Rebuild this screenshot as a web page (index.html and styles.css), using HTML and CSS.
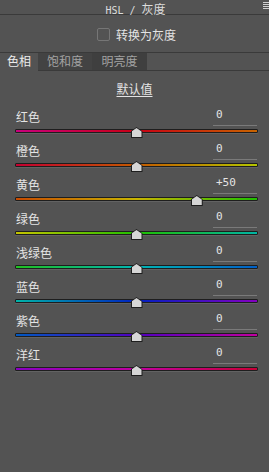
FILE: index.html
```html
<!DOCTYPE html>
<html lang="zh">
<head>
    <meta charset="UTF-8">
    <title>HSL / 灰度</title>
    <link rel="stylesheet" href="styles.css">
</head>
<body>
    <div class="panel">
        <header class="panel-header">
            <span class="title"><span class="latin">HSL / </span>灰度</span>
            <svg class="menu" width="6" height="8" viewBox="0 0 6 8">
                <rect x="0" y="0" width="6" height="1" fill="#d0d0d0"/>
                <rect x="0" y="2" width="6" height="1" fill="#d0d0d0"/>
                <rect x="0" y="4" width="6" height="1" fill="#d0d0d0"/>
                <rect x="0" y="6" width="6" height="1" fill="#d0d0d0"/>
            </svg>
        </header>

        <label class="convert">
            <span class="checkbox"></span>
            <span>转换为灰度</span>
        </label>

        <nav class="tabs">
            <span class="tab active">色相</span>
            <span class="tab tab-sat">饱和度</span>
            <span class="tab tab-lum">明亮度</span>
            <span class="tabs-rest"></span>
        </nav>

        <div class="default"><span>默认值</span></div>

        <div class="sliders">
            <div class="row">
                <div class="row-head"><span class="label">红色</span><span class="value">0</span></div>
                <div class="track red"><span class="thumb" style="left: 50%"></span></div>
            </div>
            <div class="row">
                <div class="row-head"><span class="label">橙色</span><span class="value">0</span></div>
                <div class="track orange"><span class="thumb" style="left: 50%"></span></div>
            </div>
            <div class="row">
                <div class="row-head"><span class="label">黄色</span><span class="value">+50</span></div>
                <div class="track yellow"><span class="thumb" style="left: 75%"></span></div>
            </div>
            <div class="row">
                <div class="row-head"><span class="label">绿色</span><span class="value">0</span></div>
                <div class="track green"><span class="thumb" style="left: 50%"></span></div>
            </div>
            <div class="row">
                <div class="row-head"><span class="label">浅绿色</span><span class="value">0</span></div>
                <div class="track aqua"><span class="thumb" style="left: 50%"></span></div>
            </div>
            <div class="row">
                <div class="row-head"><span class="label">蓝色</span><span class="value">0</span></div>
                <div class="track blue"><span class="thumb" style="left: 50%"></span></div>
            </div>
            <div class="row">
                <div class="row-head"><span class="label">紫色</span><span class="value">0</span></div>
                <div class="track purple"><span class="thumb" style="left: 50%"></span></div>
            </div>
            <div class="row">
                <div class="row-head"><span class="label">洋红</span><span class="value">0</span></div>
                <div class="track magenta"><span class="thumb" style="left: 50%"></span></div>
            </div>
        </div>
    </div>
</body>
</html>
```

FILE: styles.css
```css
body {
    margin: 0;
    background-color: #535353;
    color: #e4e4e4;
    font-family: "Noto Sans CJK SC", "Noto Sans", sans-serif;
    font-size: 12px;
}
.panel {
    width: 269px;
    height: 472px;
    overflow: hidden;
}
.panel-header {
    position: relative;
    box-sizing: border-box;
    height: 15px;
    border-bottom: 1px solid #3a3a3a;
    text-align: center;
    color: #dcdcdc;
}
.panel-header .title {
    display: inline-block;
    padding-left: 2px;
    font-size: 12px;
    line-height: 14px;
}
.panel-header .latin {
    font-family: "DejaVu Sans Mono", monospace;
    font-size: 10px;
    white-space: pre;
}
.panel-header .menu {
    position: absolute;
    right: 0;
    top: 2px;
}
.convert {
    height: 37px;
    display: flex;
    align-items: center;
    justify-content: center;
    gap: 6px;
    padding-left: 4px;
    padding-top: 1px;
    box-sizing: border-box;
}
.checkbox {
    width: 11px;
    height: 11px;
    border: 1px solid #767676;
    border-radius: 2px;
}
.tabs {
    display: flex;
    height: 18px;
    border-top: 1px solid #3a3a3a;
}
.tab {
    box-sizing: border-box;
    height: 18px;
    line-height: 16px;
    text-align: center;
    color: #a2a2a2;
    background-color: #434343;
    border-bottom: 1px solid #3a3a3a;
}
.tab.active {
    width: 38px;
    color: #ececec;
    background-color: #535353;
    border-bottom-color: #535353;
}
.tab-sat {
    width: 54px;
}
.tab-lum {
    width: 55px;
    background-color: #3f3f3f;
}
.tabs-rest {
    flex: 1;
    border-bottom: 1px solid #3a3a3a;
}
.default {
    padding-top: 10px;
    line-height: 16px;
    text-align: center;
}
.default span {
    text-decoration: underline;
    text-underline-offset: 2px;
}
.sliders {
    margin-top: 10px;
}
.row {
    height: 34px;
}
.row-head {
    display: flex;
    justify-content: space-between;
    height: 20px;
    padding: 0 12px 0 16px;
}
.label {
    padding-top: 2px;
    line-height: 16px;
}
.value {
    box-sizing: border-box;
    width: 44px;
    height: 19px;
    padding-left: 3px;
    line-height: 16px;
    font-family: "DejaVu Sans Mono", monospace;
    font-size: 11px;
    border-bottom: 1px solid #7a7a7a;
}
.track {
    position: relative;
    box-sizing: border-box;
    height: 4px;
    margin: 2px 11px 0 15px;
    border: 1px solid #1e1e1e;
    border-radius: 1px;
    box-shadow: 0 1px 0 #626262;
}
.thumb {
    position: absolute;
    top: -3px;
    width: 12px;
    height: 11px;
    margin-left: -6px;
    background: #1e1e1e;
    clip-path: polygon(50% 0, 100% 40%, 100% 100%, 0 100%, 0 40%);
}
.thumb::after {
    content: "";
    position: absolute;
    left: 1px;
    top: 1px;
    right: 1px;
    bottom: 1px;
    background: #d6d6d6;
    clip-path: polygon(50% 0, 100% 40%, 100% 100%, 0 100%, 0 40%);
}
.red { background: linear-gradient(to right, #c8007c, #c80014 50%, #c86400); }
.orange { background: linear-gradient(to right, #c40030, #c45a00 50%, #b4c400); }
.yellow { background: linear-gradient(to right, #c84a00, #c8b400 50%, #20c000); }
.green { background: linear-gradient(to right, #c4c400, #20c000 50%, #00b4a4); }
.aqua { background: linear-gradient(to right, #20c020, #00b4b4 50%, #0060c8); }
.blue { background: linear-gradient(to right, #00b4a8, #0020c0 50%, #8400c0); }
.purple { background: linear-gradient(to right, #0058c0, #5000c0 50%, #c000a0); }
.magenta { background: linear-gradient(to right, #8800c0, #c000a0 50%, #c80038); }
```
